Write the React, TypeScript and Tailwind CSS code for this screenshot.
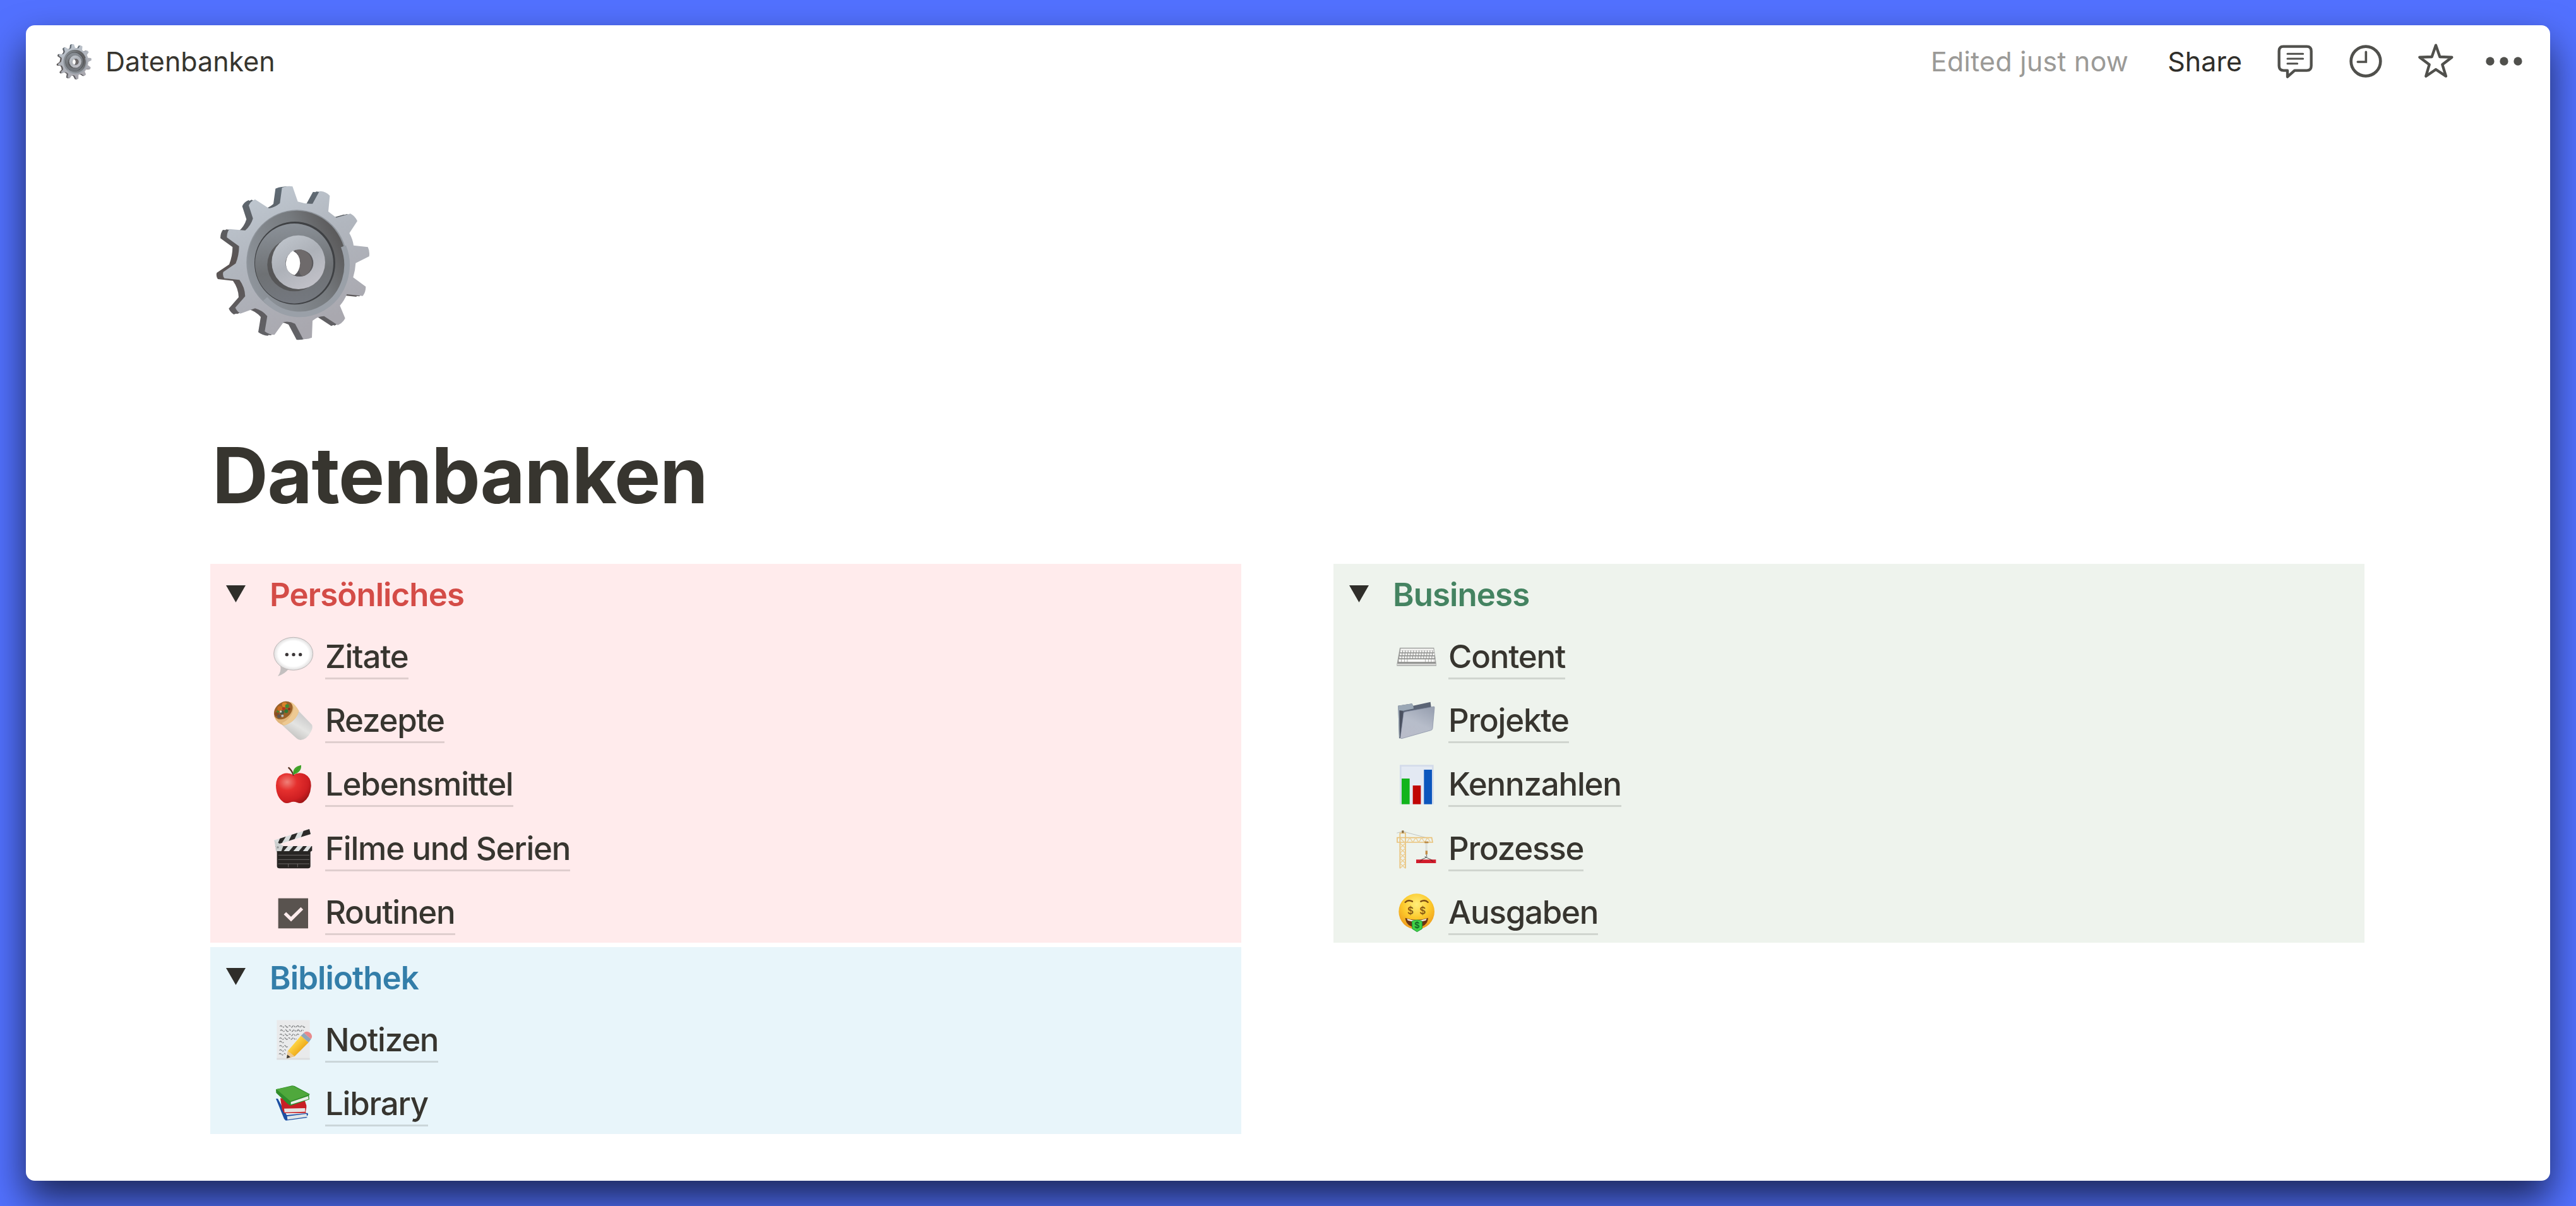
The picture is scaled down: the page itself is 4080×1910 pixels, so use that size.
import type { ReactNode } from 'react';

type Item = { label: string; icon: ReactNode };

function GearIcon({ className, id }: { className: string; id: string }) {
  const face =
    'M370 155 L380 82 Q404 70 430 76 L455 148 Q490 160 525 158 L558 98 Q588 98 607 120 L600 195 L638 224 L705 205 Q728 218 738 240 L700 298 Q716 326 720 356 L788 364 Q798 385 794 408 L730 440 Q728 475 718 508 L778 552 Q778 578 764 596 L688 588 Q676 618 655 642 L680 702 Q668 726 645 735 L580 692 Q550 692 525 714 L522 794 Q500 803 480 800 L442 728 Q415 714 388 720 L344 781 Q318 780 298 764 L310 692 Q286 664 252 655 L182 680 Q166 670 158 652 L205 598 Q204 556 178 520 L106 512 Q96 498 101 482 L160 442 Q176 402 176 360 L118 318 Q118 294 130 278 L205 285 Q232 262 242 228 L222 166 Q230 146 252 137 L318 180 Q346 176 370 155 Z';
  return (
    <svg viewBox="60 60 750 750" className={className}>
      <defs>
        <linearGradient id={`${id}-face`} x1="0" y1="0" x2="0.4" y2="1">
          <stop offset="0" stopColor="#c3ccd5" />
          <stop offset="0.5" stopColor="#b1b6be" />
          <stop offset="1" stopColor="#a9a8af" />
        </linearGradient>
        <linearGradient id={`${id}-side`} x1="0" y1="0" x2="0" y2="1">
          <stop offset="0" stopColor="#5f6b75" />
          <stop offset="0.5" stopColor="#5a5352" />
          <stop offset="1" stopColor="#626368" />
        </linearGradient>
        <linearGradient id={`${id}-groove`} x1="0" y1="0.7" x2="1" y2="0.2">
          <stop offset="0" stopColor="#8f959c" />
          <stop offset="0.6" stopColor="#767a7e" />
          <stop offset="1" stopColor="#545252" />
        </linearGradient>
        <linearGradient id={`${id}-disc`} x1="0.4" y1="0" x2="0.5" y2="1">
          <stop offset="0" stopColor="#8b9198" />
          <stop offset="0.6" stopColor="#6e7174" />
          <stop offset="1" stopColor="#74787f" />
        </linearGradient>
        <linearGradient id={`${id}-hub`} x1="0" y1="0" x2="0.6" y2="1">
          <stop offset="0" stopColor="#c3c9d0" />
          <stop offset="0.55" stopColor="#adb1b8" />
          <stop offset="1" stopColor="#c0c0c7" />
        </linearGradient>
      </defs>
      <path d={face} fill={`url(#${id}-side)`} transform="translate(-31 4)" />
      <path d={face} fill={`url(#${id}-side)`} transform="translate(-16 2)" />
      <path d={face} fill={`url(#${id}-face)`} />
      <ellipse cx="451" cy="437" rx="240" ry="250" fill="#8f959c" />
      <ellipse cx="450" cy="436" rx="234" ry="245" fill={`url(#${id}-groove)`} />
      <path d="M672 360 A225 235 0 0 1 300 610" fill="none" stroke="#9aa0a8" strokeWidth="26" />
      <ellipse cx="441" cy="440" rx="192" ry="197" fill="#3f4144" />
      <ellipse cx="438" cy="442" rx="186" ry="190" fill={`url(#${id}-disc)`} />
      <ellipse cx="438" cy="448" rx="128" ry="126" fill="#4c4a4a" opacity="0.7" />
      <ellipse cx="458" cy="436" rx="127" ry="128" fill={`url(#${id}-hub)`} />
      <ellipse cx="463" cy="440" rx="66" ry="64" fill="#5b5a5d" />
      <path d="M470 376 Q520 390 522 440 Q518 490 480 502 Q452 494 466 440 Q470 410 440 378 Z" fill="#6e6a6b" />
      <path d="M432 382 Q466 400 466 440 Q464 478 440 497 Q400 486 398 440 Q402 398 432 382 Z" fill="#ffffff" />
    </svg>
  );
}

const BubbleIcon = (
  <>
    <defs>
      <radialGradient id="bubble" cx="0.5" cy="0.5" r="0.55">
        <stop offset="0.7" stopColor="#ffffff" />
        <stop offset="1" stopColor="#d2d0d0" />
      </radialGradient>
    </defs>
    <path d="M36 138 Q42 166 24 189 Q58 178 76 154 Z" fill="#c3bfbf" />
    <ellipse cx="98" cy="82" rx="93" ry="78" fill="url(#bubble)" stroke="#bdb7b7" strokeWidth="3" />
    <circle cx="67" cy="86" r="8" fill="#3a3536" />
    <circle cx="99" cy="86" r="8" fill="#3a3536" />
    <circle cx="131" cy="86" r="8" fill="#3a3536" />
  </>
);

const BurritoIcon = (
  <>
    <defs>
      <linearGradient id="foil" x1="0.7" y1="0.2" x2="0.3" y2="0.8">
        <stop offset="0" stopColor="#cfcfcf" />
        <stop offset="0.5" stopColor="#e4e4e2" />
        <stop offset="1" stopColor="#c9c8c6" />
      </linearGradient>
    </defs>
    <path d="M124 52 L186 116 Q193 130 180 152 Q162 186 132 189 Q120 188 112 180 L44 118 Z" fill="url(#foil)" />
    <path d="M68 5 Q98 10 124 50 Q112 100 54 120 Q20 112 6 76 Z" fill="#e0b57a" />
    <path d="M84 6 Q110 22 124 50 Q112 100 54 120 L44 108 Q92 86 100 36 Z" fill="#edc992" />
    <ellipse cx="50" cy="48" rx="50" ry="36" transform="rotate(-42 50 48)" fill="#9a6128" />
    <circle cx="56" cy="22" r="12" fill="#d9832a" />
    <circle cx="34" cy="40" r="12" fill="#c96b1e" />
    <circle cx="20" cy="66" r="10" fill="#8a4a22" />
    <circle cx="68" cy="28" r="9" fill="#3f8a35" />
    <circle cx="44" cy="58" r="10" fill="#4d5a44" />
    <circle cx="64" cy="52" r="9" fill="#2f7a34" />
    <circle cx="30" cy="76" r="9" fill="#5f5550" />
    <circle cx="52" cy="40" r="7" fill="#b9341f" />
    <circle cx="46" cy="74" r="6" fill="#b6bfc0" />
    <circle cx="78" cy="42" r="6" fill="#8b2f1d" />
    <circle cx="38" cy="54" r="5" fill="#d8d6cb" />
    <circle cx="24" cy="54" r="5" fill="#3f8a35" />
  </>
);

const AppleIcon = (
  <>
    <defs>
      <radialGradient id="apple" cx="0.32" cy="0.3" r="0.8">
        <stop offset="0" stopColor="#f08078" />
        <stop offset="0.35" stopColor="#e5302e" />
        <stop offset="0.75" stopColor="#cf1f22" />
        <stop offset="1" stopColor="#9c1516" />
      </radialGradient>
    </defs>
    <path d="M98 52 Q124 36 152 48 Q184 64 182 106 Q178 160 144 182 Q130 190 116 183 Q98 176 82 183 Q66 190 52 182 Q16 158 15 102 Q16 60 46 48 Q72 38 98 52 Z" fill="url(#apple)" />
    <path d="M76 18 Q90 30 98 52" fill="none" stroke="#5b3a2a" strokeWidth="7" strokeLinecap="round" />
    <path d="M97 50 Q92 14 135 5 Q138 40 97 50 Z" fill="#43a52b" />
    <path d="M99 48 Q112 28 130 10" fill="none" stroke="#2f8420" strokeWidth="2" />
  </>
);

const ClapperIcon = (
  <>
    <path d="M6 56 L174 3 L180 27 L14 80 Z" fill="#d8dcdc" />
    <path d="M34 48 L62 39 L44 69 L22 76 Z M90 30 L118 21 L104 50 L76 59 Z M146 12 L174 3 L180 27 L134 41 Z" fill="#2c2b29" />
    <path d="M8 58 L52 84 L50 110 L15 108 Z" fill="#cdd0d0" />
    <path d="M14 84 H187 V106 L178 112 H20 Z" fill="#2c2b29" />
    <path d="M14 84 H50 L40 110 H18 Z" fill="#cdd0d0" />
    <path d="M72 84 H98 L76 110 H50 Z M118 84 H144 L122 110 H96 Z M162 84 H184 L164 110 H142 Z" fill="#dde0e0" />
    <circle cx="24" cy="90" r="5" fill="#909494" />
    <path d="M20 108 H179 V180 Q178 190 168 190 H32 Q21 190 20 180 Z" fill="#272523" />
    <path d="M26 127 H174 M26 148 H174 M26 168 H174 M74 168 V184 M118 168 V184" stroke="#6b6866" strokeWidth="3" />
  </>
);

const CheckIcon = (
  <>
    <rect x="26" y="29" width="142" height="143" fill="#59534f" />
    <path d="M58 100 L87 128 L139 77" fill="none" stroke="#fdebec" strokeWidth="16" />
  </>
);

const KeyboardIcon = (
  <>
    <path d="M18 53 H181 L192 132 V140 H4 V132 Z" fill="#a9aaa8" />
    <path d="M20 56 H179 L189 130 H7 Z" fill="#8f908e" />
    <path d="M22 58 H178 L180 66 H21 Z" fill="#f3f3f1" />
    <path d="M20 71 H181 M18 85 H183 M16 99 H185" stroke="#f4f4f2" strokeWidth="9" strokeDasharray="10 3" />
    <path d="M13 115 H186" stroke="#fbfbf9" strokeWidth="12" strokeDasharray="12 2 12 2 12 2 84 2" />
    <path d="M6 130 H190 V136 H6 Z" fill="#dededc" />
  </>
);

const FolderIcon = (
  <>
    <defs>
      <linearGradient id="folder" x1="0.7" y1="0" x2="0.2" y2="1">
        <stop offset="0" stopColor="#9ba3b3" />
        <stop offset="0.5" stopColor="#b7bdca" />
        <stop offset="1" stopColor="#b9bcc9" />
      </linearGradient>
    </defs>
    <path d="M10 26 L76 16 L82 26 L164 8 L168 40 L38 74 L24 176 L15 182 Z" fill="#5b6475" />
    <path d="M10 26 L76 16 L82 26 L84 40 L34 50 L24 150 L15 182 Z" fill="#9aa7b5" />
    <path d="M16 48 L34 50 L30 170 L18 180 Z" fill="#4b5160" />
    <path d="M44 55 L180 30 Q184 30 183 36 L174 134 Q173 141 166 143 L28 182 Q20 184 21 176 L36 62 Q37 56 44 55 Z" fill="url(#folder)" stroke="#8189a0" strokeWidth="2" />
  </>
);

const ChartIcon = (
  <>
    <rect x="18" y="4" width="161" height="187" fill="#d3dbea" />
    <rect x="26" y="12" width="145" height="179" fill="#e3e9f3" />
    <rect x="27" y="69" width="38" height="122" fill="#12b41c" />
    <rect x="80" y="102" width="38" height="89" fill="#c00505" />
    <rect x="133" y="27" width="38" height="164" fill="#0c56bd" />
  </>
);

const CraneIcon = (
  <>
    <path d="M4 22 L32 14 L150 46" fill="none" stroke="#a9adaa" strokeWidth="2" />
    <path d="M19 190 V22 H45 V190 M6 44 H170 L174 66 H6 Z" fill="none" stroke="#e9c27a" strokeWidth="5" />
    <path
      d="M19 190 L45 166 L19 142 L45 118 L19 94 L45 70 L19 46 M45 190 L19 166 L45 142 L19 118 L45 94 L19 70 M52 66 L66 44 L80 66 L94 44 L108 66 L122 44 L136 66 L150 44 L164 66"
      fill="none"
      stroke="#edcd90"
      strokeWidth="4"
    />
    <rect x="28" y="10" width="9" height="12" fill="#8a6a3a" />
    <path d="M142 68 V108 M147 68 V108" stroke="#c4c8c2" strokeWidth="2" />
    <rect x="136" y="62" width="18" height="8" fill="#b98842" />
    <rect x="140" y="106" width="10" height="18" fill="#c28b45" />
    <path d="M144 124 Q150 134 144 138 Q138 138 138 132 M144 138 L112 152 M144 138 L176 152" fill="none" stroke="#5a5a58" strokeWidth="3" />
    <rect x="96" y="148" width="94" height="17" fill="#d11c2c" />
    <path d="M112 158 L126 150 M164 150 L178 158" stroke="#6c1a20" strokeWidth="3" />
  </>
);

const MoneyFaceIcon = (
  <>
    <defs>
      <radialGradient id="money" cx="0.5" cy="0.3" r="0.7">
        <stop offset="0" stopColor="#ffee7a" />
        <stop offset="0.55" stopColor="#fcc92c" />
        <stop offset="1" stopColor="#ee9a1c" />
      </radialGradient>
    </defs>
    <circle cx="98" cy="92" r="85" fill="url(#money)" />
    <path d="M44 48 Q58 34 78 44 M118 44 Q138 34 152 48" fill="none" stroke="#7a4a12" strokeWidth="7" strokeLinecap="round" />
    <text x="69" y="105" textAnchor="middle" fontSize="46" fontWeight="600" fill="#8a5a12">$</text>
    <text x="127" y="105" textAnchor="middle" fontSize="46" fontWeight="600" fill="#8a5a12">$</text>
    <path d="M44 122 Q98 142 153 122 Q150 164 98 168 Q48 164 44 122 Z" fill="#6b3413" />
    <path d="M52 126 Q98 142 146 126 L142 134 Q98 148 56 134 Z" fill="#f7f3ea" />
    <path d="M76 138 Q100 126 124 138 V174 L100 188 L78 174 Z" fill="#3fd148" stroke="#1f9a35" strokeWidth="3" />
    <text x="100" y="172" textAnchor="middle" fontSize="40" fontWeight="600" fill="#146a26">$</text>
  </>
);

const MemoIcon = (
  <>
    <defs>
      <linearGradient id="pencil" x1="0" y1="0" x2="1" y2="1">
        <stop offset="0.3" stopColor="#ffd94a" />
        <stop offset="0.7" stopColor="#eda514" />
      </linearGradient>
    </defs>
    <rect x="19" y="2" width="157" height="188" fill="#e9eaeb" />
    <rect x="19" y="182" width="157" height="8" fill="#dcdddf" />
    <g fill="none" stroke="#7f8182" strokeWidth="4" strokeDasharray="14 4 7 5 20 4 10 5">
      <path d="M34 32 q5 -8 10 0 t10 0 t10 0 t10 0 t10 0 t10 0 t10 0 t10 0 t10 0 t10 0 t10 0 t10 0" />
      <path d="M36 52 q5 -8 10 0 t10 0 t10 0 t10 0 t10 0 t10 0 t10 0 t10 0 t10 0 t10 0 t10 0" />
      <path d="M34 72 q5 -8 10 0 t10 0 t10 0 t10 0 t10 0 t10 0 t10 0 t10 0 t10 0" />
      <path d="M32 90 q5 -8 10 0 t10 0 t10 0 t10 0 t10 0 t10 0 t10 0 t10 0" />
      <path d="M32 106 q5 -8 10 0 t10 0" />
      <path d="M32 126 q5 -8 10 0 t10 0 t10 0 t10 0" />
      <path d="M32 146 q5 -8 10 0 t10 0 t10 0" />
      <path d="M30 164 q5 -8 10 0 t10 0 t10 0" />
    </g>
    <path d="M134 76 L170 108 L104 174 L66 184 L72 148 Z" fill="url(#pencil)" />
    <path d="M72 148 L104 174 L66 184 Z" fill="#ecc994" />
    <path d="M69 166 L84 178 L66 184 Z" fill="#3b3836" />
    <path d="M134 76 L148 62 L182 92 L170 108 Z" fill="#8fa6b8" />
    <path d="M148 62 Q160 50 178 62 Q192 76 182 92 Z" fill="#e88a8c" />
  </>
);

const BooksIcon = (
  <>
    <path d="M15 72 L24 72 L66 150 L166 140 L168 148 L160 160 L166 162 L62 176 L54 168 Z" fill="#1d4fa3" />
    <path d="M68 156 L160 144 L164 158 L70 172 Z" fill="#dfe6ea" />
    <path d="M36 70 L150 74 L160 104 V114 L156 136 L160 140 L54 141 L44 122 Z" fill="#c81f24" />
    <path d="M54 119 L154 117 V134 L56 137 Z" fill="#e6e3e2" />
    <path d="M15 28 L92 10 Q98 10 104 12 L176 50 L172 58 L174 76 L84 106 L70 96 L16 44 Z" fill="#2f8d2b" />
    <path d="M17 27 L96 12 L174 52 L84 84 Z" fill="#4fa83c" />
    <path d="M86 88 L168 60 L170 74 L86 100 Z" fill="#e9efe8" />
  </>
);

const personal: Item[] = [
  { label: 'Zitate', icon: BubbleIcon },
  { label: 'Rezepte', icon: BurritoIcon },
  { label: 'Lebensmittel', icon: AppleIcon },
  { label: 'Filme und Serien', icon: ClapperIcon },
  { label: 'Routinen', icon: CheckIcon },
];

const library: Item[] = [
  { label: 'Notizen', icon: MemoIcon },
  { label: 'Library', icon: BooksIcon },
];

const business: Item[] = [
  { label: 'Content', icon: KeyboardIcon },
  { label: 'Projekte', icon: FolderIcon },
  { label: 'Kennzahlen', icon: ChartIcon },
  { label: 'Prozesse', icon: CraneIcon },
  { label: 'Ausgaben', icon: MoneyFaceIcon },
];

function ToggleBlock({
  title,
  titleClass,
  blockClass,
  items,
}: {
  title: string;
  titleClass: string;
  blockClass: string;
  items: Item[];
}) {
  return (
    <section className={`pl-[25px] ${blockClass}`}>
      <div className="flex h-[94px] items-center">
        <svg viewBox="0 0 31 27" className="h-[27px] w-[31px] shrink-0">
          <path d="M0 0 H31 L15.5 27 Z" fill="#2f2e2a" />
        </svg>
        <h2 className={`ml-[38px] pt-[4px] text-[51px] leading-[66px] font-semibold tracking-[-0.018em] ${titleClass}`}>
          {title}
        </h2>
      </div>
      <ul>
        {items.map((item) => (
          <li key={item.label} className="flex h-[101.2px] items-center pt-[8px] pl-[74px]">
            <svg viewBox="0 0 192 192" className="-mt-[3px] mr-[19px] h-16 w-16 shrink-0 overflow-visible">
              {item.icon}
            </svg>
            <a className="border-b-3 border-[#37352f]/16 text-[51px] leading-[66px] font-[550] tracking-[-0.024em]">
              {item.label}
            </a>
          </li>
        ))}
      </ul>
    </section>
  );
}

function TopBar() {
  return (
    <header className="flex h-[114px] items-center justify-between pr-[43px] pl-[48px] text-[43px] leading-[60px]">
      <div className="flex items-center gap-[21px]">
        <GearIcon id="gear-small" className="h-[57px] w-[57px]" />
        <span>Datenbanken</span>
      </div>
      <div className="flex items-center text-[#50504c]">
        <span className="mr-[62px] tracking-[0.005em] text-[#9b9a97]">Edited just now</span>
        <span className="mr-[54px] text-[#2f2e2a]">Share</span>
        <div className="flex items-center">
          <svg viewBox="0 0 180 180" className="mr-[52px] h-[60px] w-[60px]" fill="none" stroke="currentColor" strokeLinejoin="round" strokeLinecap="round">
            <path d="M34 20 H146 Q167 20 167 42 V112 Q167 134 146 134 H88 L54 164 V134 H36 Q14 134 14 112 V42 Q14 20 34 20 Z" strokeWidth="13" />
            <path d="M54 55 H128 M54 78 H128 M54 101 H101" strokeWidth="9" />
          </svg>
          <svg viewBox="0 0 180 180" className="mr-[51px] h-[60px] w-[60px]" fill="none" stroke="currentColor" strokeLinecap="round">
            <circle cx="90" cy="90" r="70" strokeWidth="14" />
            <path d="M91 46 V93 H52" strokeWidth="11" />
          </svg>
          <svg viewBox="0 0 180 180" className="mr-[48px] h-[60px] w-[60px]" fill="none" stroke="currentColor" strokeLinejoin="round">
            <path d="M90 14 L109 69 L166 71 L121 106 L138 161 L90 129 L43 161 L59 106 L13 71 L71 69 Z" strokeWidth="13" />
          </svg>
          <svg viewBox="0 0 180 180" className="h-[60px] w-[60px]" fill="currentColor">
            <circle cx="24" cy="90" r="20" />
            <circle cx="90" cy="90" r="20" />
            <circle cx="156" cy="90" r="20" />
          </svg>
        </div>
      </div>
    </header>
  );
}

export default function App() {
  return (
    <div className="h-[1910px] w-[4080px] overflow-hidden bg-[#5271ff] px-[41px] py-[40px] font-['Inter',sans-serif] text-[#37352f]">
      <div className="h-[1830px] rounded-[14px] bg-white shadow-[0_30px_60px_rgba(0,0,0,0.65)]">
        <TopBar />
        <main className="pr-[294px] pl-[292px]">
          <GearIcon id="gear-large" className="mt-[136px] ml-[7px] h-[250px] w-[250px]" />
          <h1 className="mt-[138px] ml-[3px] text-[123px] leading-[150px] font-bold tracking-[-0.011em]">Datenbanken</h1>
          <div className="mt-[65px] grid grid-cols-2 gap-[146px]">
            <div className="flex flex-col gap-[7px]">
              <ToggleBlock title="Persönliches" titleClass="text-[#d44c47]" blockClass="bg-[#ffebec]" items={personal} />
              <ToggleBlock title="Bibliothek" titleClass="text-[#337ea9]" blockClass="bg-[#e8f5fa]" items={library} />
            </div>
            <div>
              <ToggleBlock title="Business" titleClass="text-[#448361]" blockClass="bg-[#eef3ed]" items={business} />
            </div>
          </div>
        </main>
      </div>
    </div>
  );
}
